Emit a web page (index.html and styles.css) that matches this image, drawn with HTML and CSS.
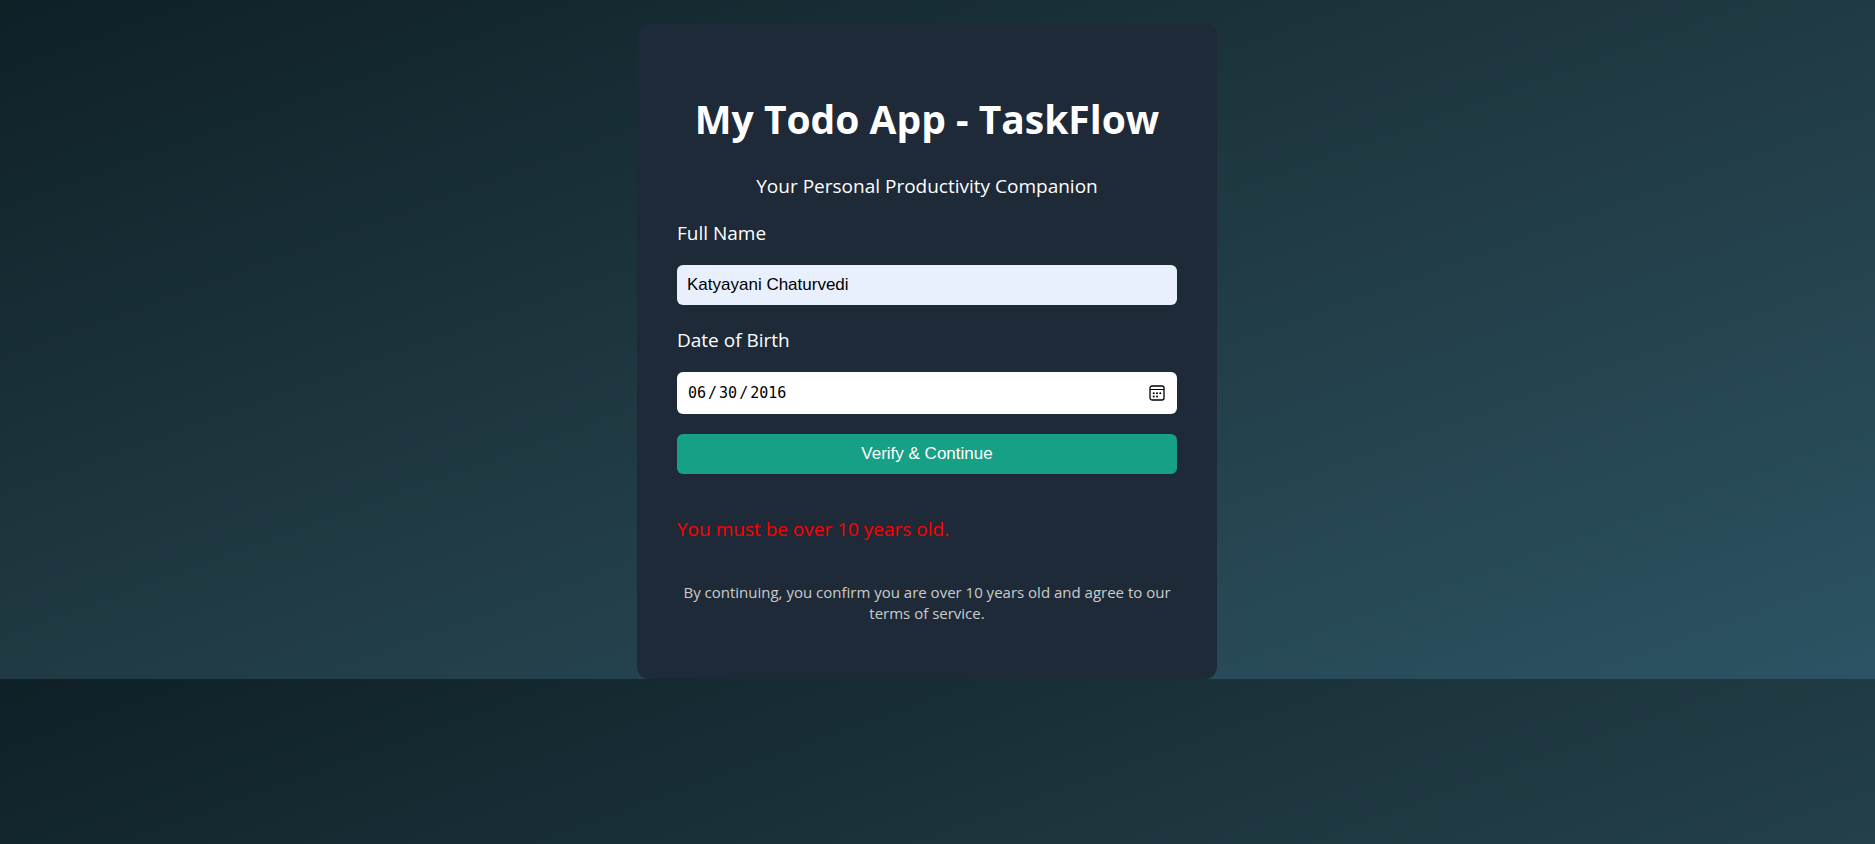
FILE: index.html
```html
<!DOCTYPE html>
<html lang="en">
<head>
<meta charset="utf-8">
<meta name="viewport" content="width=device-width, initial-scale=1">
<title>My Todo App - TaskFlow</title>
<link rel="stylesheet" href="styles.css">
</head>
<body class="page">
<main class="card">
  <h1 class="title">My Todo App - TaskFlow</h1>
  <p class="subtitle">Your Personal Productivity Companion</p>
  <form class="form">
    <label class="label" for="name">Full Name</label>
    <input class="field" type="text" id="name" value="Katyayani Chaturvedi">
    <label class="label" for="dob">Date of Birth</label>
    <input class="field field-date" type="date" id="dob" value="2016-06-30">
    <button class="submit" type="button">Verify &amp; Continue</button>
  </form>
  <p class="error" role="alert">You must be over 10 years old.</p>
  <p class="terms">By continuing, you confirm you are over 10 years old and agree to our terms of service.</p>
</main>
</body>
</html>
```

FILE: styles.css
```css
* {
  box-sizing: border-box;
}

.page {
  margin: 0;
  padding: 24px 21px 0 0;
  background: linear-gradient(to bottom right, #0f2027, #203a43, #2c5364);
  color: #fff;
  font-family: "Segoe UI", "Open Sans", sans-serif;
  font-size: 19px;
  line-height: 27px;
}

.card {
  max-width: 580px;
  margin: 0 auto;
  padding: 40px;
  border-radius: 12px;
  background: #1e2a38;
}

.title {
  margin: 28px 0;
  font-size: 39px;
  line-height: 53px;
  text-align: center;
}

.subtitle {
  margin: 0 0 18px;
  text-align: center;
}

.form {
  display: flex;
  flex-direction: column;
  gap: 20px;
}

.label {
  padding-top: 4px;
  line-height: 23px;
}

.field {
  width: 100%;
  height: 40px;
  padding: 10px;
  border: 0;
  border-radius: 6px;
  background: #e8f0fe;
  color: #000;
  font-family: "Liberation Sans", Arial, sans-serif;
  font-size: 17px;
}

.field-date {
  height: 42px;
  background: #fff;
  font-family: Consolas, "DejaVu Sans Mono", monospace;
  font-size: 15px;
}

.field-date::-webkit-datetime-edit-text {
  padding: 0 1px;
}

.field-date::-webkit-calendar-picker-indicator {
  width: 16px;
  height: 16px;
  margin-right: 2px;
  padding: 0;
  background: url("data:image/svg+xml,%3Csvg xmlns='http://www.w3.org/2000/svg' viewBox='0 0 16 16'%3E%3Crect x='1' y='1' width='14' height='14' rx='2' fill='none' stroke='%23000' stroke-width='1.3'/%3E%3Cpath d='M1 4.5h14' stroke='%23000'/%3E%3Cg fill='%23000'%3E%3Ccircle cx='4.7' cy='8.2' r='1'/%3E%3Ccircle cx='8' cy='8.2' r='1'/%3E%3Ccircle cx='11.3' cy='8.2' r='1'/%3E%3Ccircle cx='4.7' cy='11.4' r='1'/%3E%3Ccircle cx='8' cy='11.4' r='1'/%3E%3C/g%3E%3C/svg%3E") center / 16px 16px no-repeat;
}

.submit {
  height: 40px;
  border: 0;
  border-radius: 6px;
  background: #16a085;
  color: #fff;
  font-family: "Liberation Sans", Arial, sans-serif;
  font-size: 17px;
}

.error {
  margin: 42px 0 39px;
  color: #f00;
}

.terms {
  margin: 0 0 15px;
  color: #ccc;
  font-size: 15px;
  line-height: 21px;
  text-align: center;
}
```
